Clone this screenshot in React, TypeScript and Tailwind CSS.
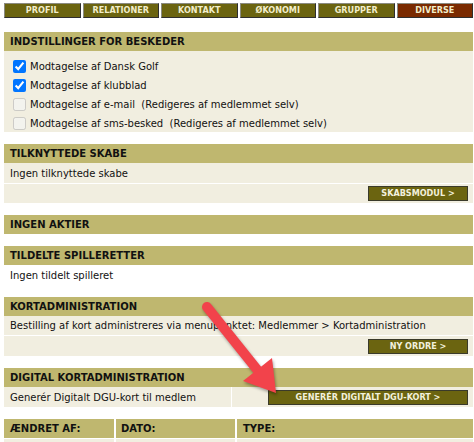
import React from 'react';

const TABS = ['PROFIL', 'RELATIONER', 'KONTAKT', 'ØKONOMI', 'GRUPPER', 'DIVERSE'];

const CHECKS = [
  { label: 'Modtagelse af Dansk Golf', checked: true, disabled: false },
  { label: 'Modtagelse af klubblad', checked: true, disabled: false },
  { label: 'Modtagelse af e-mail\u00a0\u00a0(Redigeres af medlemmet selv)', checked: false, disabled: true },
  { label: 'Modtagelse af sms-besked\u00a0\u00a0(Redigeres af medlemmet selv)', checked: false, disabled: true },
];

function Header({ children }: { children: React.ReactNode }) {
  return (
    <div className="h-[19px] bg-[#bfb76f] pl-[6px] flex items-center text-[10px] font-bold text-[#111]">
      {children}
    </div>
  );
}

function Button({ children, w }: { children: React.ReactNode; w: string }) {
  return (
    <button
      className={`${w} h-[15px] bg-[#6b6410] border border-[#3a3a2a] text-[#f2f0dc] text-[9px] leading-none font-bold font-['DejaVu_Sans_Condensed','DejaVu_Sans',sans-serif] flex items-center justify-center`}
    >
      {children}
    </button>
  );
}

export default function App() {
  return (
    <div className="relative w-[474px] h-[442px] bg-white overflow-hidden font-['DejaVu_Sans',Verdana,sans-serif] text-[10px] text-[#111]">
      <div className="pl-[4px] pr-[1px] pt-[3px]">
        <div className="flex gap-[2px]">
          {TABS.map((t) => (
            <div
              key={t}
              className={`flex-1 h-[15px] flex items-center justify-center text-[9px] font-bold font-['DejaVu_Sans_Condensed','DejaVu_Sans',sans-serif] text-[#f2eecb] border border-t-[#8a8a80] border-l-[#8a8a80] border-r-[#2e2e2e] border-b-[#2e2e2e] ${
                t === 'DIVERSE' ? 'bg-[#7a2a00]' : 'bg-[#6b6410]'
              }`}
            >
              {t}
            </div>
          ))}
        </div>

        <div className="mt-[14px] flex flex-col">
          <Header>INDSTILLINGER FOR BESKEDER</Header>
          <div className="h-[81px] bg-[#f1eee0] pt-[6px]">
            {CHECKS.map((c) => (
              <label key={c.label} className="h-[19px] flex items-center pl-[9px]">
                <input
                  type="checkbox"
                  defaultChecked={c.checked}
                  disabled={c.disabled}
                  className="w-[13px] h-[13px] m-0"
                />
                <span className="ml-[4px]">{c.label}</span>
              </label>
            ))}
          </div>

          <div className="mt-[12px]">
            <Header>TILKNYTTEDE SKABE</Header>
            <div className="h-[20px] bg-[#f1eee0] pl-[6px] flex items-center">Ingen tilknyttede skabe</div>
            <div className="mt-[1px] h-[19px] bg-[#f1eee0] flex items-center justify-end pr-[5px]">
              <Button w="w-[100px]">SKABSMODUL &gt;</Button>
            </div>
          </div>

          <div className="mt-[12px]">
            <Header>INGEN AKTIER</Header>
          </div>

          <div className="mt-[12px]">
            <Header>TILDELTE SPILLERETTER</Header>
            <div className="h-[20px] bg-white pl-[6px] flex items-center">Ingen tildelt spilleret</div>
          </div>

          <div className="mt-[12px]">
            <Header>KORTADMINISTRATION</Header>
            <div className="h-[19px] bg-[#f1eee0] pl-[6px] flex items-center">
              Bestilling af kort administreres via menupunktet: Medlemmer &gt; Kortadministration
            </div>
            <div className="mt-[1px] h-[20px] bg-[#f1eee0] flex items-center justify-end pr-[5px]">
              <Button w="w-[100px]">NY ORDRE &gt;</Button>
            </div>
          </div>

          <div className="mt-[12px]">
            <Header>DIGITAL KORTADMINISTRATION</Header>
            <div className="h-[20px] flex gap-[1px]">
              <div className="w-[227px] bg-[#f1eee0] pl-[6px] flex items-center">Generér Digitalt DGU-kort til medlem</div>
              <div className="flex-1 bg-[#f1eee0] flex items-center justify-end pr-[5px]">
                <Button w="w-[200px]">GENERÉR DIGITALT DGU-KORT &gt;</Button>
              </div>
            </div>
          </div>

          <div className="mt-[12px]">
            <div className="h-[19px] flex gap-[2px] text-[10px] font-bold">
              <div className="w-[110px] bg-[#bfb76f] pl-[6px] flex items-center">ÆNDRET AF:</div>
              <div className="w-[119px] bg-[#bfb76f] pl-[5px] flex items-center">DATO:</div>
              <div className="flex-1 bg-[#bfb76f] pl-[6px] flex items-center">TYPE:</div>
            </div>
            <div className="mt-[1px] h-[20px] flex gap-[2px]">
              <div className="w-[110px] bg-[#f1eee0]" />
              <div className="w-[119px] bg-[#f1eee0]" />
              <div className="flex-1 bg-[#f1eee0]" />
            </div>
          </div>
        </div>
      </div>

      <svg
        className="absolute left-0 top-0 pointer-events-none"
        width={474}
        height={442}
        viewBox="0 0 474 442"
        style={{ filter: 'drop-shadow(1px 2px 1.5px rgba(0,0,0,0.35))' }}
      >
        <line x1={207} y1={307} x2={259} y2={372} stroke="#f2434b" strokeWidth={10} strokeLinecap="round" />
        <polygon points="276,393 272,358 243,381" fill="#f2434b" />
      </svg>
    </div>
  );
}
